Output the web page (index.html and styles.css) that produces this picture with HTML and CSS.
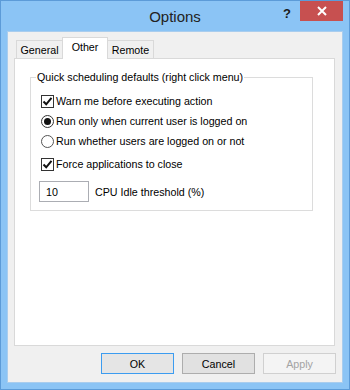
FILE: index.html
```html
<!DOCTYPE html>
<html lang="en">
<head>
    <meta charset="UTF-8">
    <meta name="viewport" content="width=device-width, initial-scale=1.0">
    <title>Options</title>
    <link rel="stylesheet" href="styles.css">
</head>
<body>
    <div class="window">
        <div class="titlebar">
            <span class="title">Options</span>
            <span class="help">?</span>
            <span class="close">
                <svg width="10" height="10" viewBox="0 0 10 10"><path d="M1 1L9 9M9 1L1 9" stroke="#fff" stroke-width="2"/></svg>
            </span>
        </div>
        <div class="client">
            <div class="tabs">
                <div class="tab">General</div>
                <div class="tab selected">Other</div>
                <div class="tab">Remote</div>
            </div>
            <div class="pane">
                <fieldset class="group">
                    <legend>Quick scheduling defaults (right click menu)</legend>
                    <div class="row">
                        <span class="check on">
                            <svg width="11" height="11" viewBox="0 0 11 11"><path d="M1.5 5.5L4.2 8.3L9.5 1.8" fill="none" stroke="#111" stroke-width="2"/></svg>
                        </span>
                        <span class="label">Warn me before executing action</span>
                    </div>
                    <div class="row">
                        <span class="radio on"><span class="dot"></span></span>
                        <span class="label">Run only when current user is logged on</span>
                    </div>
                    <div class="row">
                        <span class="radio"></span>
                        <span class="label">Run whether users are logged on or not</span>
                    </div>
                    <div class="row force">
                        <span class="check on">
                            <svg width="11" height="11" viewBox="0 0 11 11"><path d="M1.5 5.5L4.2 8.3L9.5 1.8" fill="none" stroke="#111" stroke-width="2"/></svg>
                        </span>
                        <span class="label">Force applications to close</span>
                    </div>
                    <div class="row cpu">
                        <span class="textbox">10</span>
                        <span class="cpu-label">CPU Idle threshold (%)</span>
                    </div>
                </fieldset>
            </div>
            <div class="buttons">
                <button class="btn default">OK</button>
                <button class="btn">Cancel</button>
                <button class="btn disabled">Apply</button>
            </div>
        </div>
    </div>
</body>
</html>
```
FILE: styles.css
```css
body {
    margin: 0;
    font-family: "Liberation Sans", Arial, sans-serif;
    font-size: 10.7px;
    color: #000;
}

.window {
    width: 350px;
    height: 390px;
    box-sizing: border-box;
    background-color: #8bc4f5;
    border: 1px solid #5c9bd8;
    display: flex;
    flex-direction: column;
}

.titlebar {
    height: 30px;
    position: relative;
    display: flex;
    justify-content: center;
    align-items: center;
}

.title {
    font-size: 15px;
    color: #222;
    margin-top: 1px;
}

.help {
    position: absolute;
    left: 282px;
    top: 5px;
    font-weight: bold;
    font-size: 13px;
    color: #1a1a1a;
}

.close {
    position: absolute;
    right: 6px;
    top: 0;
    width: 43px;
    height: 20px;
    background-color: #c75050;
    display: flex;
    justify-content: center;
    align-items: center;
}

.client {
    flex: 1;
    margin: 0 6px 6px;
    background-color: #f0f0f0;
    border: 1px solid #a9cdee;
    padding: 5px 6px 8px 6px;
    display: flex;
    flex-direction: column;
}

.tabs {
    display: flex;
    align-items: flex-end;
    padding-left: 2px;
    height: 21px;
    position: relative;
    z-index: 1;
}

.tab {
    height: 18px;
    box-sizing: border-box;
    border: 1px solid #d9d9d9;
    border-bottom: none;
    background-color: #f0f0f0;
    margin-right: -1px;
    padding: 1px 0 0;
    display: flex;
    align-items: center;
    width: 47px;
    justify-content: center;
}

.tab.selected {
    height: 22px;
    margin-bottom: -1px;
    width: 46px;
    background-color: #fff;
    align-items: flex-start;
    padding-top: 3px;
    position: relative;
}

.pane {
    width: 321px;
    height: 288px;
    box-sizing: border-box;
    background-color: #fff;
    border: 1px solid #d9d9d9;
    padding: 11px 0 0 15px;
}

.group {
    margin: 0;
    width: 283px;
    box-sizing: border-box;
    border: 1px solid #dcdcdc;
    padding: 7px 0 8px 10px;
}

.group legend {
    padding: 0 1px;
    margin-left: -5px;
    line-height: 14px;
}

.row {
    display: flex;
    align-items: center;
    height: 20px;
}

.row.force {
    margin-top: 3px;
}

.row.cpu {
    margin-top: 7px;
    height: 21px;
    margin-left: -2px;
}

.check, .radio {
    width: 13px;
    height: 13px;
    box-sizing: border-box;
    border: 1px solid #333;
    background-color: #fff;
    margin-right: 2px;
    display: flex;
    justify-content: center;
    align-items: center;
}

.radio {
    border-radius: 50%;
    border-color: #555;
}

.radio.on {
    border-color: #333;
}

.dot {
    width: 7px;
    height: 7px;
    border-radius: 50%;
    background-color: #111;
}

.textbox {
    width: 50px;
    height: 21px;
    box-sizing: border-box;
    border: 1px solid #abadb3;
    background-color: #fff;
    padding-left: 6px;
    display: flex;
    align-items: center;
}

.cpu-label {
    margin-left: 6px;
}

.buttons {
    display: flex;
    justify-content: flex-end;
    gap: 8px;
    margin-top: 7px;
}

.btn {
    width: 73px;
    height: 21px;
    font-family: "Liberation Sans", Arial, sans-serif;
    font-size: 10.7px;
    color: #000;
    background-color: #e1e1e1;
    border: 1px solid #adadad;
    padding: 0;
}

.btn.default {
    border-color: #3c9cf0;
    background-color: #e5e5e5;
}

.btn.disabled {
    background-color: #f4f4f4;
    border-color: #d0d0d0;
    color: #a3a3a3;
}
```
